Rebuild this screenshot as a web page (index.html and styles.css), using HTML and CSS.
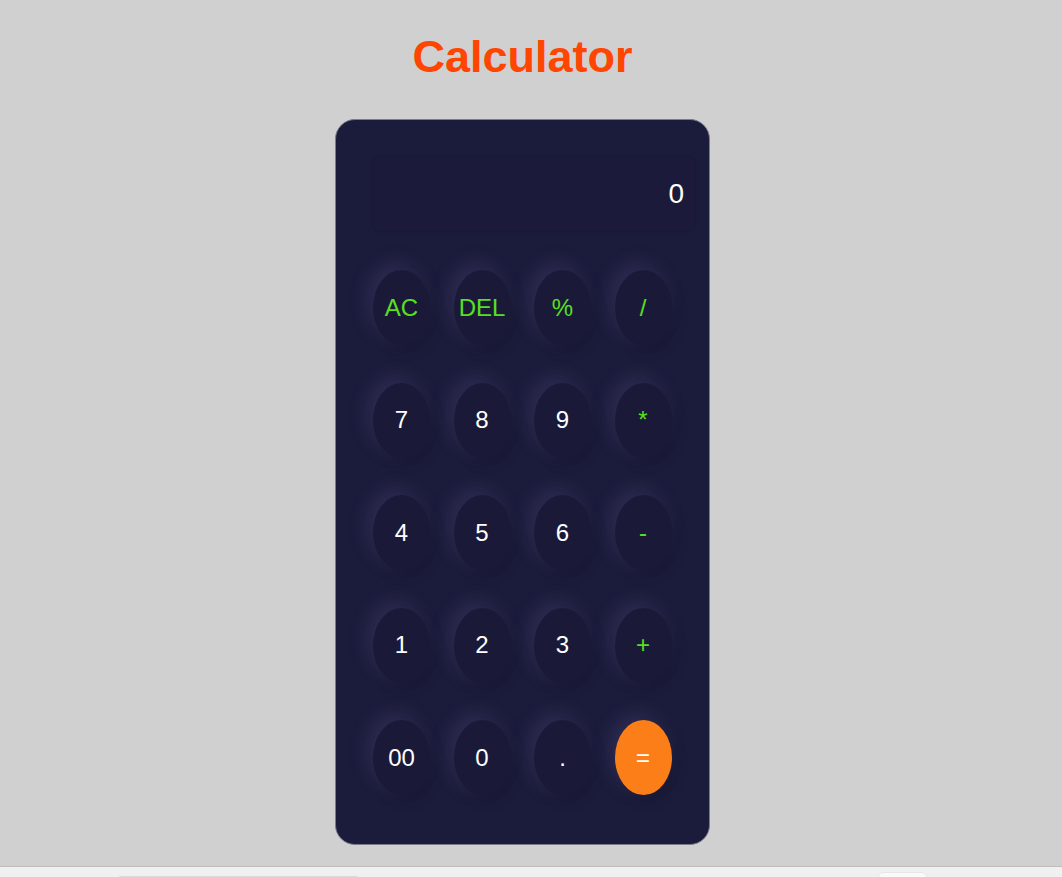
FILE: index.html
```html
<!DOCTYPE html>
<html lang="en">
<head>
<meta charset="utf-8">
<title>Calculator</title>
<link rel="stylesheet" href="styles.css">
</head>
<body>
<main class="page">
  <h1 class="title">Calculator</h1>
  <div class="calc">
    <div class="display">0</div>
    <div class="keys">
      <button class="key op">AC</button>
      <button class="key op">DEL</button>
      <button class="key op">%</button>
      <button class="key op">/</button>
      <button class="key">7</button>
      <button class="key">8</button>
      <button class="key">9</button>
      <button class="key op">*</button>
      <button class="key">4</button>
      <button class="key">5</button>
      <button class="key">6</button>
      <button class="key op">-</button>
      <button class="key">1</button>
      <button class="key">2</button>
      <button class="key">3</button>
      <button class="key op">+</button>
      <button class="key">00</button>
      <button class="key">0</button>
      <button class="key">.</button>
      <button class="key equal">=</button>
    </div>
  </div>
</main>
<footer class="foot">
  <div class="foot-field"></div>
  <div class="foot-btn"></div>
</footer>
</body>
</html>
```
FILE: styles.css
```css
html, body {
  margin: 0;
  padding: 0;
  background: #d0d0d0;
  font-family: "Liberation Sans", Arial, sans-serif;
}

.page {
  padding-right: 17px;
  display: flex;
  flex-direction: column;
  align-items: center;
}

.title {
  margin: 31px 0 37px;
  font-size: 45px;
  line-height: 51px;
  font-weight: bold;
  color: #ff4500;
}

.calc {
  box-sizing: border-box;
  width: 375px;
  height: 726px;
  background: #1b1b3b;
  border: 1px solid #7a7a88;
  border-radius: 20px;
  padding: 37px 0 0 37px;
  margin-bottom: 21px;
}

.display {
  box-sizing: border-box;
  width: 322px;
  height: 74px;
  border-radius: 6px;
  box-shadow: 0 0 3px rgba(0, 0, 0, 0.18);
  background: #1b1a3a;
  color: #ffffff;
  font-size: 28px;
  display: flex;
  align-items: center;
  justify-content: flex-end;
  padding-right: 11px;
}

.keys {
  margin-top: 39px;
  display: grid;
  grid-template-columns: repeat(4, 57px);
  grid-auto-rows: 75px;
  column-gap: 23.5px;
  row-gap: 37.5px;
}

.key {
  width: 57px;
  height: 75px;
  border: none;
  border-radius: 50%;
  background: #1a1a38;
  color: #ffffff;
  font-family: "Liberation Sans", Arial, sans-serif;
  font-size: 24px;
  padding: 0;
  box-shadow: -6px -7px 20px rgba(150, 140, 210, 0.16), 5px 6px 14px rgba(0, 0, 0, 0.12);
}

.key.op {
  color: #58e01f;
}

.key.equal {
  background: #fb7e18;
  color: #ffffff;
}

.foot {
  height: 60px;
  background: #f0f0f0;
  border-top: 1px solid #bdbdbd;
  position: relative;
}

.foot-field {
  position: absolute;
  left: 117px;
  top: 9px;
  width: 243px;
  height: 40px;
  border-top: 1px solid #dcdcdc;
  border-radius: 4px;
}

.foot-btn {
  position: absolute;
  left: 878px;
  top: 5px;
  width: 47px;
  height: 40px;
  background: #fafafa;
  border: 1px solid #e6e6e6;
  border-radius: 5px;
}
```
